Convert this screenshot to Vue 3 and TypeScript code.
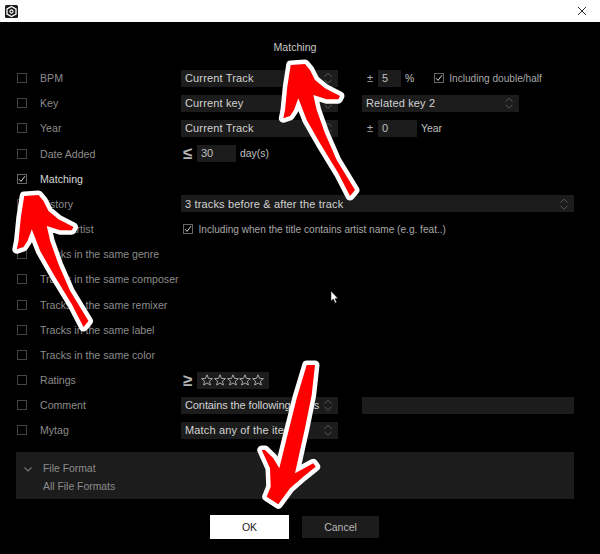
<script setup lang="ts">
interface Row {
  label: string
  kind: string
  on?: boolean
}
const rows: Row[] = [
  { label: 'BPM', kind: 'bpm' },
  { label: 'Key', kind: 'key' },
  { label: 'Year', kind: 'year' },
  { label: 'Date Added', kind: 'date' },
  { label: 'Matching', kind: 'none', on: true },
  { label: 'History', kind: 'history' },
  { label: 'Same artist', kind: 'artist' },
  { label: 'Tracks in the same genre', kind: 'none' },
  { label: 'Tracks in the same composer', kind: 'none' },
  { label: 'Tracks in the same remixer', kind: 'none' },
  { label: 'Tracks in the same label', kind: 'none' },
  { label: 'Tracks in the same color', kind: 'none' },
  { label: 'Ratings', kind: 'ratings' },
  { label: 'Comment', kind: 'comment' },
  { label: 'Mytag', kind: 'mytag' },
]
const arrowUp =
  'M290.7 65 L305 64 L310 70 L315 80 L325 88.3 L340 96 L338.3 99.3 L326.7 99.3 L313.3 95 L316.7 110 L325 133.3 L336.7 160 L355 190 L350 196 L338.3 173.3 L320 143.3 L306.7 120 L298.3 98.3 L294 110 L290 116 L283.3 118.3 L285 110 L287.3 86.7 Z'
const arrowDown =
  'M306.7 365 L315 365 L311.7 395 L305 428.3 L295 473.3 L313.3 463.3 L315.7 466.7 L303.3 476.7 L290 488.3 L278.3 504.3 L266.7 496.7 L270.7 486.7 L270 468.3 L261.7 450 L265 450 L273.3 458.3 L279.3 468.3 L286.7 438.3 L296.7 398.3 Z'
const updown = 'M0.5 4.7 L4 1.2 L7.5 4.7 M0.5 7.8 L4 11.3 L7.5 7.8'
</script>

<template>
  <div class="app">
    <header class="titlebar">
      <svg class="logo" width="13" height="13" viewBox="0 0 13 13">
        <rect width="13" height="13" rx="1.5" fill="#1a1a1a" />
        <path d="M6.5 1.5 L11 4 V9 L6.5 11.5 L2 9 V4 Z" fill="none" stroke="#fff" stroke-width="1.3" />
        <circle cx="6.5" cy="6.5" r="1.6" fill="none" stroke="#fff" stroke-width="1.1" />
      </svg>
      <svg class="close" width="10" height="10" viewBox="0 0 10 10">
        <path d="M1 1 L9 9 M9 1 L1 9" stroke="#333" stroke-width="1" fill="none" />
      </svg>
    </header>

    <main class="body">
      <h1 class="title">Matching</h1>

      <div class="rows">
        <div v-for="row in rows" :key="row.label" class="row">
          <span class="check" :class="{ checked: row.on }">
            <svg v-if="row.on" width="8" height="8" viewBox="0 0 8 8">
              <path d="M1 4.2 L3 6.4 L7 1.2" fill="none" stroke="#ddd" stroke-width="1" />
            </svg>
          </span>
          <span class="label" :class="{ active: row.on }">{{ row.label }}</span>

          <div class="controls">
            <template v-if="row.kind === 'bpm'">
              <div class="select narrow"><span>Current Track</span><svg class="updown" width="8" height="12" viewBox="0 0 8 12"><path :d="updown" /></svg></div>
              <span class="pm">±</span>
              <span class="input w23">5</span>
              <span class="unit">%</span>
              <span class="check small-gap checked">
                <svg width="8" height="8" viewBox="0 0 8 8"><path d="M1 4.2 L3 6.4 L7 1.2" fill="none" stroke="#ddd" stroke-width="1" /></svg>
              </span>
              <span class="text tick-text">Including double/half</span>
            </template>
            <template v-else-if="row.kind === 'key'">
              <div class="select narrow"><span>Current key</span><svg class="updown" width="8" height="12" viewBox="0 0 8 12"><path :d="updown" /></svg></div>
              <div class="select narrow second"><span>Related key 2</span><svg class="updown" width="8" height="12" viewBox="0 0 8 12"><path :d="updown" /></svg></div>
            </template>
            <template v-else-if="row.kind === 'year'">
              <div class="select narrow"><span>Current Track</span><svg class="updown" width="8" height="12" viewBox="0 0 8 12"><path :d="updown" /></svg></div>
              <span class="pm">±</span>
              <span class="input w39">0</span>
              <span class="unit">Year</span>
            </template>
            <template v-else-if="row.kind === 'date'">
              <span class="cmp">≤</span>
              <span class="input w39">30</span>
              <span class="unit">day(s)</span>
            </template>
            <template v-else-if="row.kind === 'history'">
              <div class="select wide"><span>3 tracks before &amp; after the track</span><svg class="updown" width="8" height="12" viewBox="0 0 8 12"><path :d="updown" /></svg></div>
            </template>
            <template v-else-if="row.kind === 'artist'">
              <span class="check artist-check checked">
                <svg width="8" height="8" viewBox="0 0 8 8"><path d="M1 4.2 L3 6.4 L7 1.2" fill="none" stroke="#ddd" stroke-width="1" /></svg>
              </span>
              <span class="text tick-text">Including when the title contains artist name (e.g. feat..)</span>
            </template>
            <template v-else-if="row.kind === 'ratings'">
              <span class="cmp">≥</span>
              <span class="stars">
                <svg v-for="n in 5" :key="n" width="12" height="12" viewBox="0 0 12 12">
                  <path d="M6 0.8 L7.5 4.4 L11.4 4.7 L8.4 7.2 L9.4 11 L6 9 L2.6 11 L3.6 7.2 L0.6 4.7 L4.5 4.4 Z" fill="none" stroke="#b5b5b5" stroke-width="0.9" />
                </svg>
              </span>
            </template>
            <template v-else-if="row.kind === 'comment'">
              <div class="select narrow"><span class="tight">Contains the following items</span><svg class="updown" width="8" height="12" viewBox="0 0 8 12"><path :d="updown" /></svg></div>
              <span class="input comment-input" />
            </template>
            <template v-else-if="row.kind === 'mytag'">
              <div class="select narrow"><span>Match any of the items</span><svg class="updown" width="8" height="12" viewBox="0 0 8 12"><path :d="updown" /></svg></div>
            </template>
          </div>
        </div>
      </div>

      <section class="panel">
        <svg class="chevron" width="8" height="5" viewBox="0 0 8 5">
          <path d="M0.5 0.5 L4 4 L7.5 0.5" fill="none" stroke="#777" stroke-width="1.1" />
        </svg>
        <div class="panel-text">
          <div>File Format</div>
          <div>All File Formats</div>
        </div>
      </section>

      <footer class="buttons">
        <button class="btn ok">OK</button>
        <button class="btn cancel">Cancel</button>
      </footer>
    </main>

    <svg class="cursor" width="9" height="14" viewBox="0 0 9 14">
      <path d="M1 1 L1 11 L3.4 9 L5 13 L6.6 12.3 L5 8.6 L8 8.6 Z" fill="#fff" stroke="#111" stroke-width="0.5" />
    </svg>

    <svg class="arrows" width="600" height="554" viewBox="0 0 600 554">
      <g fill="#f00" stroke="#fff" stroke-width="9" stroke-linejoin="round" paint-order="stroke">
        <path :d="arrowUp" />
        <path :d="arrowUp" transform="translate(-266.5 131)" />
        <path :d="arrowDown" />
      </g>
    </svg>
  </div>
</template>

<style>
html, body { margin: 0; background: #000; }
</style>

<style scoped>
.app {
  position: relative;
  width: 600px;
  height: 554px;
  overflow: hidden;
  background: #000;
  font-family: "Liberation Sans", Arial, sans-serif;
  font-size: 11px;
  color: #8c8c8c;
}
.titlebar {
  height: 22px;
  background: #fff;
  display: flex;
  align-items: center;
  justify-content: space-between;
  padding: 0 13px 0 5px;
}
.body {
  display: flex;
  flex-direction: column;
}
.title {
  margin: 19px 0 0;
  height: 13px;
  line-height: 13px;
  font-size: 10.6px;
  font-weight: 400;
  text-align: center;
  color: #c8c8c8;
  transform: translateX(-5px);
}
.rows {
  margin-top: 11.5px;
  display: flex;
  flex-direction: column;
}
.row {
  height: 25.18px;
  display: flex;
  align-items: center;
  padding-left: 17px;
}
.check {
  box-sizing: border-box;
  width: 10px;
  height: 10px;
  border: 1px solid #444;
  display: flex;
  align-items: center;
  justify-content: center;
  flex: none;
}
.check.checked { border-color: #666; }
.label {
  margin-left: 13px;
  width: 141px;
  flex: none;
  white-space: nowrap;
  font-size: 10.6px;
}
.label.active { color: #d8d8d8; }
.controls {
  display: flex;
  align-items: center;
  color: #c0c0c0;
  min-width: 0;
}
.select {
  box-sizing: border-box;
  height: 17px;
  background: #1c1c1c;
  display: flex;
  align-items: center;
  justify-content: space-between;
  padding: 0 5px 0 4px;
  color: #d2d2d2;
  white-space: nowrap;
  letter-spacing: 0.15px;
  flex: none;
}
.tight { letter-spacing: -0.1px; }
.select.narrow { width: 157px; }
.select.second { margin-left: 24px; }
.select.wide { width: 393px; }
.updown {
  flex: none;
  margin-right: 1px;
  fill: none;
  stroke: #5a5a5a;
  stroke-width: 1;
}
.pm { margin-left: 29px; width: 11px; font-size: 11px; color: #b0b0b0; }
.input {
  box-sizing: border-box;
  height: 17px;
  line-height: 17px;
  background: #1c1c1c;
  padding-left: 4px;
  color: #c0c0c0;
  flex: none;
}
.w23 { width: 23px; }
.w39 { width: 39px; }
.unit { margin-left: 4px; font-size: 10.4px; }
.small-gap { margin-left: 19.5px; }
.tick-text { margin-left: 5.5px; white-space: nowrap; font-size: 10.1px; color: #a8a8a8; }
.artist-check { margin-left: 2px; }
.cmp {
  margin-left: 2px;
  width: 14px;
  font-size: 17px;
  font-weight: 700;
  line-height: 17px;
  color: #b5b5b5;
}
.stars {
  box-sizing: border-box;
  height: 17px;
  width: 72px;
  background: #1c1c1c;
  display: flex;
  align-items: center;
  padding-left: 4px;
  gap: 0.8px;
}
.comment-input { width: 212px; margin-left: 24px; }
.panel {
  box-sizing: border-box;
  margin: 9px 0 0 16px;
  width: 558px;
  height: 47px;
  background: #1c1c1c;
  display: flex;
  padding: 10px 0 0 8px;
  color: #8c8c8c;
}
.chevron { margin-top: 5px; }
.panel-text {
  margin-left: 11px;
  display: flex;
  flex-direction: column;
  gap: 5px;
  line-height: 13px;
  font-size: 10.4px;
}
.buttons {
  display: flex;
  align-items: center;
  margin-top: 16px;
  padding-left: 210px;
}
.btn {
  border: 0;
  padding: 0;
  font: inherit;
  font-size: 10.5px;
}
.ok {
  width: 79px;
  height: 24px;
  background: #fff;
  color: #222;
}
.cancel {
  width: 77px;
  height: 22px;
  margin-left: 13px;
  background: #1c1c1c;
  color: #b8b8b8;
}
.cursor {
  position: absolute;
  left: 330px;
  top: 290px;
}
.arrows {
  position: absolute;
  left: 0;
  top: 0;
  pointer-events: none;
}
</style>
